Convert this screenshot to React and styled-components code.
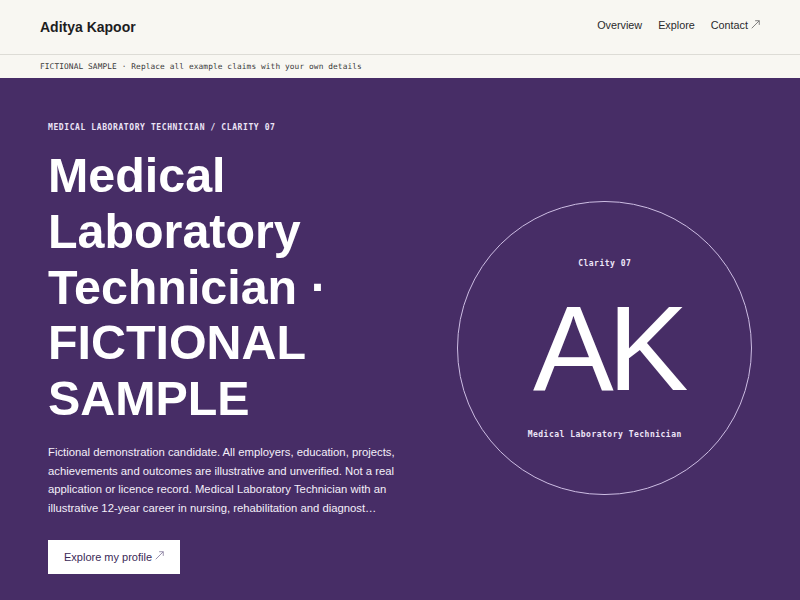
import React from 'react';
import styled, { createGlobalStyle } from 'styled-components';

const GlobalStyle = createGlobalStyle`
    html, body {
        margin: 0;
        padding: 0;
        background: #472d66;
    }
    body {
        font-family: "Liberation Sans", Arial, sans-serif;
        -webkit-font-smoothing: antialiased;
    }
    * {
        box-sizing: border-box;
    }
`;

const MONO = '"DejaVu Sans Mono", "Liberation Mono", monospace';

const Header = styled.header`
    display: flex;
    align-items: center;
    justify-content: space-between;
    height: 55px;
    padding: 0 40px;
    background: #f8f7f2;
    border-bottom: 1px solid #dddcd6;
`;

const Brand = styled.div`
    font-size: 14px;
    font-weight: 700;
    color: #1d1d1f;
`;

const Nav = styled.nav`
    display: flex;
    gap: 16px;
    padding-bottom: 4px;
`;

const NavLink = styled.a`
    display: inline-flex;
    align-items: center;
    font-size: 10.8px;
    color: #2a2a2c;
    text-decoration: none;
    cursor: pointer;
`;

const ArrowSvg = styled.svg`
    width: 9px;
    height: 9px;
    margin-left: 3px;
    margin-bottom: 2px;
    color: ${(p) => p.$color || 'currentColor'};
    flex: none;
`;

function Arrow({ color }) {
    return (
        <ArrowSvg $color={color} viewBox="0 0 10 10" fill="none" stroke="currentColor" strokeWidth="0.95">
            <path d="M0.8 9.2 L9.2 0.8" />
            <path d="M4.6 0.8 H9.2 V5.4" />
        </ArrowSvg>
    );
}

const Notice = styled.div`
    display: flex;
    align-items: center;
    height: 23px;
    padding: 0 40px;
    background: #f8f7f2;
    font-family: ${MONO};
    font-size: 7.8px;
    letter-spacing: 0.11px;
    color: #3a3a3a;
`;

const Hero = styled.section`
    display: grid;
    grid-template-columns: minmax(0, 1.2fr) minmax(0, 1fr);
    column-gap: 56px;
    align-items: center;
    padding: 44px 48px 40px;
    background: #472d66;
    color: #ffffff;
`;

const Intro = styled.div`
    display: flex;
    flex-direction: column;
    align-items: flex-start;
`;

const Kicker = styled.p`
    margin: 0 0 14px;
    font-family: ${MONO};
    font-size: 8px;
    font-weight: 700;
    line-height: 12px;
    letter-spacing: 0.6px;
    color: #ece4f6;
`;

const Title = styled.h1`
    margin: 0;
    font-size: 48.4px;
    font-weight: 700;
    line-height: 55.8px;
    color: #ffffff;
`;

const Lead = styled.p`
    margin: 16px 0 0;
    font-size: 11.3px;
    line-height: 18.7px;
    color: #f4eff9;
`;

const Button = styled.a`
    display: inline-flex;
    align-items: center;
    height: 34px;
    margin-top: 22px;
    padding: 0 16px;
    background: #ffffff;
    font-size: 11px;
    color: #3b2a57;
    text-decoration: none;
    cursor: pointer;
`;

const Seal = styled.div`
    display: flex;
    flex-direction: column;
    align-items: center;
    justify-content: center;
    gap: 18px;
    width: 100%;
    aspect-ratio: 1 / 1;
    padding-top: 4px;
    border: 1px solid #cdbde3;
    border-radius: 50%;
`;

const SealLabel = styled.span`
    font-family: ${MONO};
    font-size: 8px;
    font-weight: 700;
    line-height: 12px;
    letter-spacing: 0.5px;
    color: #eee6f8;
    margin-top: ${(p) => p.$offset || 0}px;
`;

const Monogram = styled.span`
    font-size: 121px;
    line-height: 121px;
    font-weight: 400;
    letter-spacing: -6px;
    margin-right: -6px;
    color: #ffffff;
`;

export default function App() {
    return (
        <>
            <GlobalStyle />
            <Header>
                <Brand>Aditya Kapoor</Brand>
                <Nav>
                    <NavLink>Overview</NavLink>
                    <NavLink>Explore</NavLink>
                    <NavLink>
                        Contact<Arrow color="#6b6b6b" />
                    </NavLink>
                </Nav>
            </Header>

            <Notice>FICTIONAL SAMPLE · Replace all example claims with your own details</Notice>

            <Hero>
                <Intro>
                    <Kicker>MEDICAL LABORATORY TECHNICIAN / CLARITY 07</Kicker>
                    <Title>Medical Laboratory Technician · FICTIONAL SAMPLE</Title>
                    <Lead>
                        Fictional demonstration candidate. All employers, education, projects,
                        achievements and outcomes are illustrative and unverified. Not a real
                        application or licence record. Medical Laboratory Technician with an
                        illustrative 12-year career in nursing, rehabilitation and diagnost…
                    </Lead>
                    <Button>
                        Explore my profile<Arrow color="#8a7fa0" />
                    </Button>
                </Intro>

                <Seal>
                    <SealLabel>Clarity 07</SealLabel>
                    <Monogram>AK</Monogram>
                    <SealLabel $offset={2}>Medical Laboratory Technician</SealLabel>
                </Seal>
            </Hero>
        </>
    );
}
